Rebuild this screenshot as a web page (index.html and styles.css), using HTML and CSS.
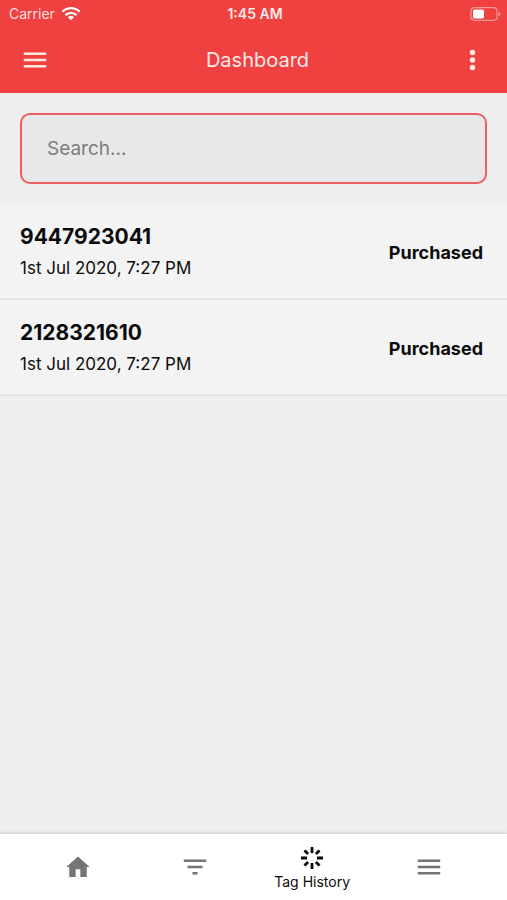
FILE: index.html
```html
<!DOCTYPE html>
<html lang="en">
<head>
  <meta charset="UTF-8">
  <meta name="viewport" content="width=device-width, initial-scale=1.0">
  <title>Dashboard</title>
  <link rel="stylesheet" href="styles.css">
</head>
<body>

  <header class="header">
    <div class="status-bar">
      <div class="carrier">
        <span>Carrier</span>
        <svg width="20" height="14" viewBox="0 0 20 14" fill="none" stroke="#fff" stroke-width="2.4">
          <path d="M1.4 4.700a12.2 12.2 0 0 1 17.2 0"/>
          <path d="M4.5 8.100a7.800 7.800 0 0 1 11 0"/>
          <path d="M10 13.300l-3-3.100a4.300 4.300 0 0 1 6 0z" fill="#fff" stroke="none"/>
        </svg>
      </div>
      <span class="time">1:45 AM</span>
      <svg class="battery" width="31" height="14" viewBox="0 0 31 14">
        <rect x="1" y="0.7" width="26" height="12.6" rx="3.5" fill="none" stroke="#fff" stroke-opacity="0.45" stroke-width="1.2"/>
        <rect x="3" y="2.6" width="11" height="8.8" rx="1.6" fill="#fff"/>
        <path d="M28.6 4.6c2.2 1 2.2 3.8 0 4.8z" fill="#fff" fill-opacity="0.5"/>
      </svg>
    </div>
    <div class="app-bar">
      <button class="icon-btn" aria-label="Open menu">
        <svg width="30" height="30" viewBox="0 0 24 24" fill="currentColor"><path d="M3 18h18v-2H3v2zm0-5h18v-2H3v2zm0-7v2h18V6H3z"/></svg>
      </button>
      <h1 class="title">Dashboard</h1>
      <button class="icon-btn" aria-label="More options">
        <svg width="15" height="30" viewBox="6 0 12 24" fill="currentColor">
          <circle cx="12" cy="6" r="2.200"/>
          <circle cx="12" cy="12" r="2.200"/>
          <circle cx="12" cy="18" r="2.200"/>
        </svg>
      </button>
    </div>
  </header>

  <main class="content">
    <div class="search">
      <input type="text" class="search-input" placeholder="Search..." aria-label="Search">
    </div>

    <ul class="tag-list">
      <li class="tag">
        <div>
          <h2 class="tag-number">9447923041</h2>
          <p class="tag-date">1st Jul 2020, 7:27 PM</p>
        </div>
        <span class="tag-status">Purchased</span>
      </li>
      <li class="tag">
        <div>
          <h2 class="tag-number">2128321610</h2>
          <p class="tag-date">1st Jul 2020, 7:27 PM</p>
        </div>
        <span class="tag-status">Purchased</span>
      </li>
    </ul>
  </main>

  <nav class="tabs">
    <button class="tab" aria-label="Home">
      <svg width="28" height="28" viewBox="0 0 24 24" fill="currentColor"><path d="M10 20.500v-6.500h4v6.500h5.500v-8.500h2.500L12 3 2 12h2.500v8.500z"/></svg>
    </button>
    <button class="tab" aria-label="Filter">
      <svg width="30" height="30" viewBox="0 0 24 24" fill="currentColor"><path d="M10 18h4v-2h-4v2zM3 6v2h18V6H3zm3 7h12v-2H6v2z"/></svg>
    </button>
    <button class="tab active">
      <svg width="24" height="24" viewBox="0 0 24 24" fill="none" stroke="currentColor" stroke-width="2.800">
        <path d="M12 1v6M12 17v6M1 12h6M17 12h6M4.500 4.500l3.600 3.600M15.900 15.900l3.600 3.600M4.500 19.500l3.600-3.600M15.900 8.100l3.600-3.600"/>
      </svg>
      <span>Tag History</span>
    </button>
    <button class="tab" aria-label="Menu">
      <svg width="30" height="30" viewBox="0 0 24 24" fill="currentColor"><path d="M3 18h18v-2H3v2zm0-5h18v-2H3v2zm0-7v2h18V6H3z"/></svg>
    </button>
  </nav>

</body>
</html>
```

FILE: styles.css
```css
* {
  box-sizing: border-box;
}

body {
  display: flex;
  flex-direction: column;
  min-height: 100vh;
  margin: 0;
  background-color: #eee;
  color: #0b0b0b;
  font-family: Inter, sans-serif;
}

h1, h2, p, ul {
  margin: 0;
  padding: 0;
}

button {
  padding: 0;
  border: none;
  background: none;
  color: inherit;
  font-family: inherit;
  cursor: pointer;
}

svg {
  display: block;
}

/* header */
.header {
  background-color: #f04141;
  color: #fff;
}

.status-bar {
  display: grid;
  grid-template-columns: 1fr auto 1fr;
  align-items: center;
  height: 27px;
  padding: 0 6px 0 9px;
  font-size: 14px;
}

.carrier {
  display: flex;
  align-items: center;
  gap: 6px;
  color: #fddede;
}

.time {
  font-weight: 600;
  color: #fee8e8;
}

.battery {
  justify-self: end;
}

.app-bar {
  display: flex;
  align-items: center;
  justify-content: space-between;
  height: 66px;
  padding: 0 27px 0 20px;
  color: #fee8e8;
}

.title {
  font-size: 20px;
  font-weight: 400;
}

/* search */
.search {
  padding: 20px;
}

.search-input {
  display: block;
  width: 100%;
  height: 71px;
  padding: 0 25px;
  border: 2px solid #e86060;
  border-radius: 10px;
  background-color: #e8e8e8;
  color: #0b0b0b;
  font-family: inherit;
  font-size: 19px;
}

.search-input::placeholder {
  color: #7c7c7c;
  opacity: 1;
}

/* tags */
.tag-list {
  list-style: none;
}

.tag {
  display: flex;
  align-items: center;
  justify-content: space-between;
  padding: 17px 24px 15px 20px;
  background-color: #f3f3f3;
  border-bottom: 2px solid #e6e6e6;
}

.tag-number {
  font-size: 21px;
  font-weight: 700;
  line-height: 32px;
}

.tag-date {
  font-size: 17px;
  line-height: 30px;
}

.tag-status {
  font-size: 18px;
  font-weight: 700;
}

/* bottom tabs */
.tabs {
  display: flex;
  height: 66px;
  margin-top: auto;
  padding: 0 19px;
  background-color: #fff;
  box-shadow: 0 -1px 3px rgba(0,0,0,0.15);
}

.tab {
  display: flex;
  flex: 1;
  flex-direction: column;
  align-items: center;
  justify-content: center;
  gap: 2px;
  color: #757575;
  font-size: 14px;
  line-height: 20px;
}

.tab.active {
  padding-top: 4px;
  color: #0b0b0b;
}
```
